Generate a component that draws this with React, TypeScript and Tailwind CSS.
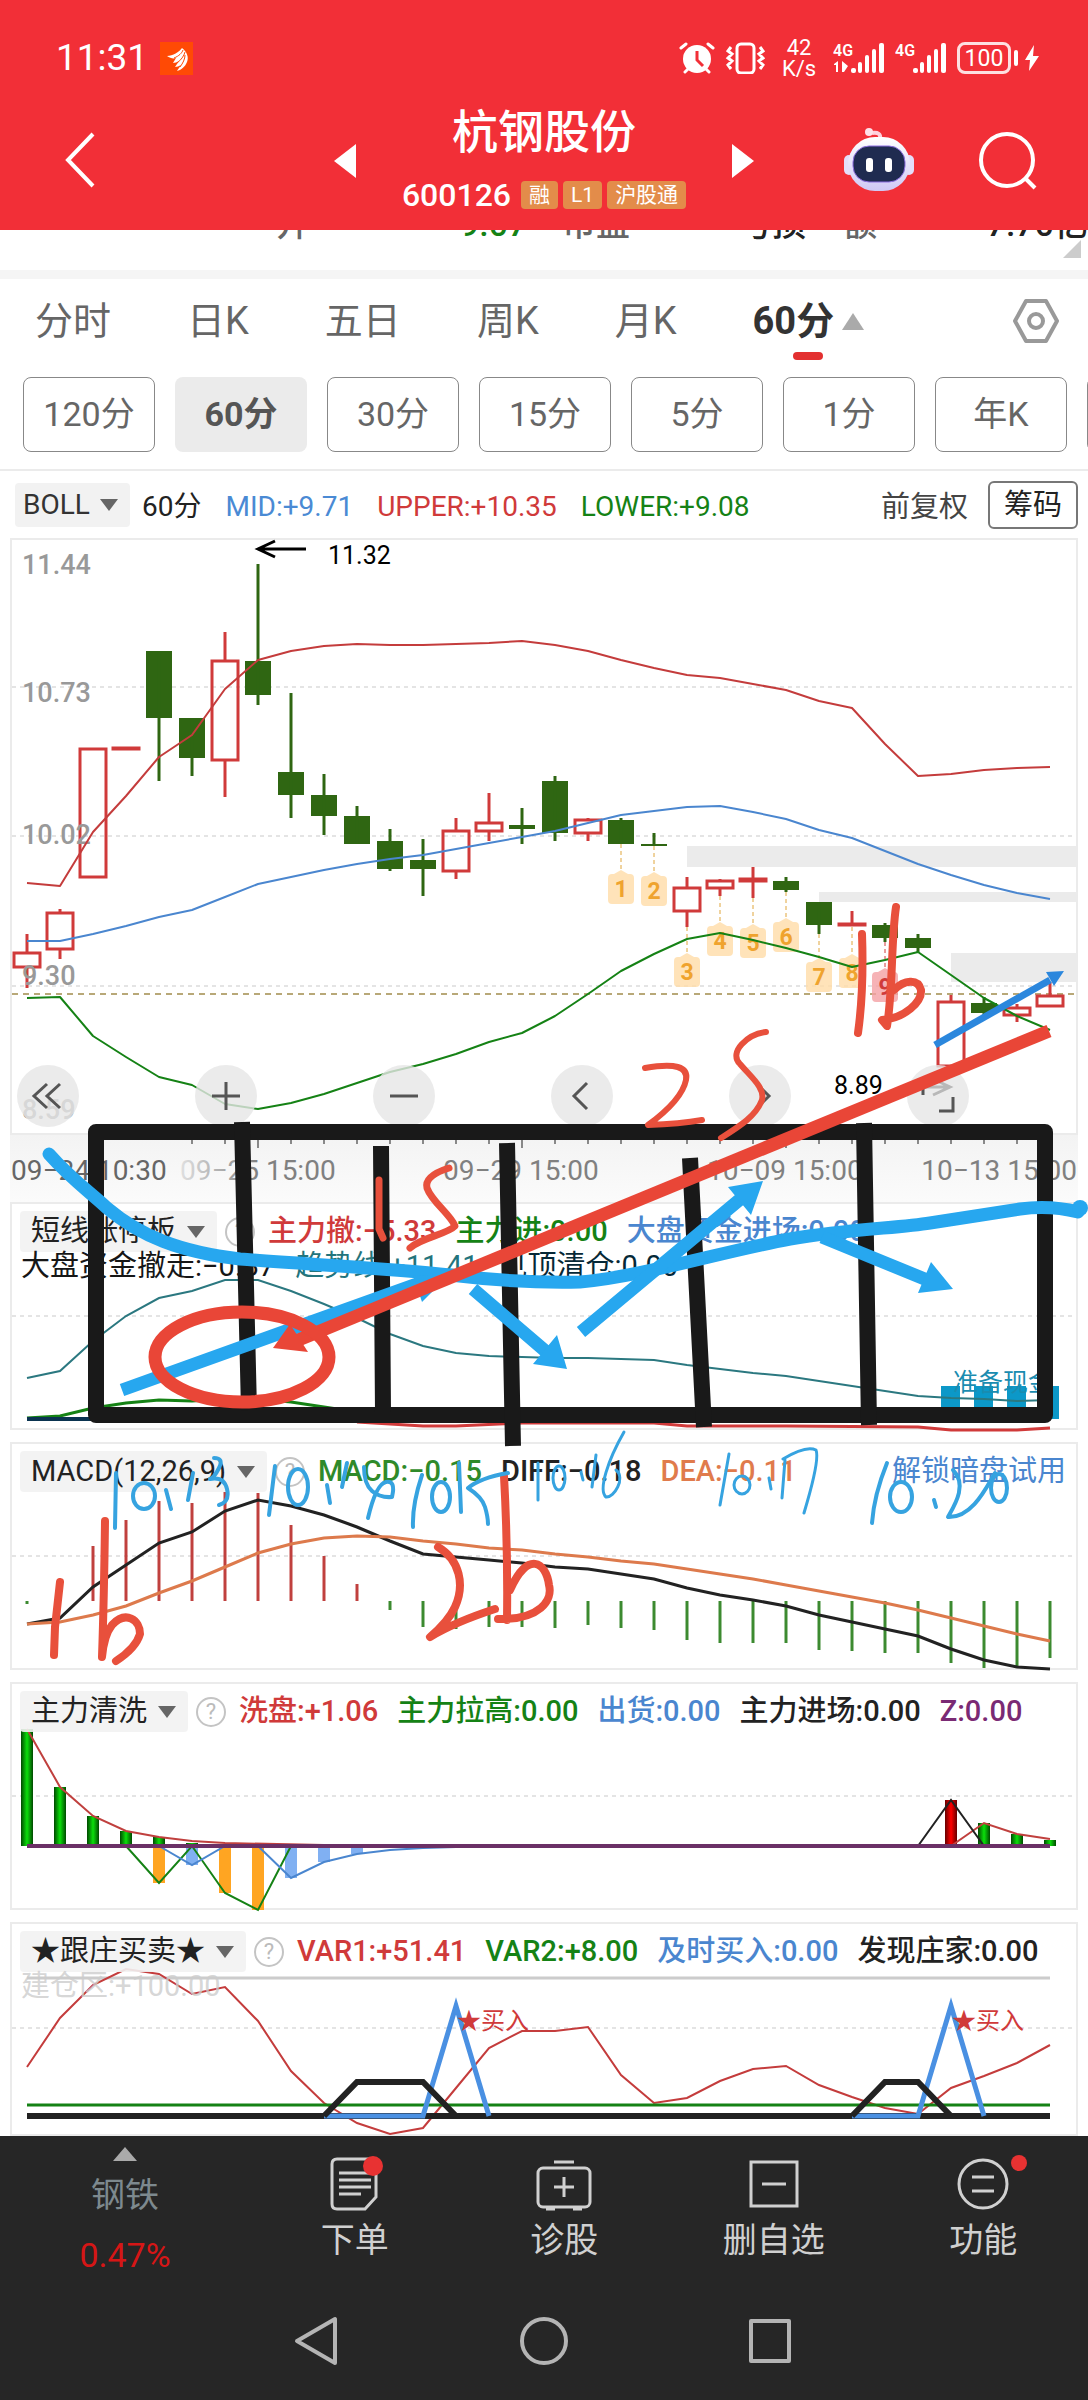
import { useState } from "react";
import type { ReactNode } from "react";

type Point = [number, number];
type Candle = { i: number; up: boolean; high: number; top: number; bottom: number; low: number };
type Value = { text: string; color: string };

// one slot for every 60 minute bar
const x = (i: number) => 27 + i * 33;
const line = (ys: number[], from = 0) => ys.map((y, k) => `${x(from + k)},${y}`).join(" ");
const path = (pts: Point[]) => pts.map(([i, y]) => `${x(i)},${y}`).join(" ");

const TABS = ["分时", "日K", "五日", "周K", "月K", "60分"];
const PERIODS = ["120分", "60分", "30分", "15分", "5分", "1分", "年K"];

const UPPER = [883, 886, 832, 796, 757, 735, 689, 660, 651, 646, 644, 645, 645, 644, 643, 641, 645, 651, 660, 668, 675, 678, 684, 690, 701, 708, 744, 776, 774, 770, 768, 767];
const MID = [941, 941, 934, 926, 917, 910, 897, 884, 877, 870, 864, 859, 855, 849, 843, 837, 831, 823, 815, 811, 807, 806, 812, 819, 830, 838, 851, 864, 875, 885, 893, 899];
const LOWER = [998, 997, 1036, 1057, 1077, 1085, 1104, 1109, 1103, 1094, 1083, 1072, 1064, 1054, 1042, 1033, 1016, 994, 971, 954, 939, 933, 940, 948, 957, 967, 960, 952, 975, 998, 1016, 1030];

const CANDLES: Candle[] = [
  { i: 0, up: true, high: 934, top: 953, bottom: 967, low: 988 },
  { i: 1, up: true, high: 909, top: 913, bottom: 949, low: 959 },
  { i: 2, up: true, high: 749, top: 749, bottom: 877, low: 877 },
  { i: 3, up: true, high: 749, top: 748, bottom: 749, low: 749 },
  { i: 4, up: false, high: 651, top: 651, bottom: 718, low: 781 },
  { i: 5, up: false, high: 718, top: 718, bottom: 758, low: 776 },
  { i: 6, up: true, high: 632, top: 661, bottom: 760, low: 797 },
  { i: 7, up: false, high: 564, top: 661, bottom: 695, low: 705 },
  { i: 8, up: false, high: 693, top: 772, bottom: 795, low: 818 },
  { i: 9, up: false, high: 774, top: 795, bottom: 816, low: 835 },
  { i: 10, up: false, high: 806, top: 816, bottom: 844, low: 844 },
  { i: 11, up: false, high: 829, top: 841, bottom: 869, low: 871 },
  { i: 12, up: false, high: 839, top: 860, bottom: 869, low: 896 },
  { i: 13, up: true, high: 818, top: 831, bottom: 871, low: 879 },
  { i: 14, up: true, high: 793, top: 823, bottom: 831, low: 841 },
  { i: 15, up: false, high: 808, top: 825, bottom: 829, low: 844 },
  { i: 16, up: false, high: 776, top: 781, bottom: 833, low: 841 },
  { i: 17, up: true, high: 818, top: 820, bottom: 833, low: 841 },
  { i: 18, up: false, high: 818, top: 820, bottom: 844, low: 844 },
  { i: 19, up: false, high: 833, top: 844, bottom: 846, low: 846 },
  { i: 20, up: true, high: 877, top: 888, bottom: 911, low: 927 },
  { i: 21, up: true, high: 879, top: 881, bottom: 888, low: 896 },
  { i: 22, up: true, high: 867, top: 879, bottom: 881, low: 898 },
  { i: 23, up: false, high: 877, top: 881, bottom: 890, low: 892 },
  { i: 24, up: false, high: 902, top: 902, bottom: 925, low: 934 },
  { i: 25, up: true, high: 911, top: 924, bottom: 925, low: 925 },
  { i: 26, up: false, high: 923, top: 925, bottom: 938, low: 942 },
  { i: 27, up: false, high: 934, top: 938, bottom: 948, low: 952 },
  { i: 28, up: true, high: 995, top: 1002, bottom: 1066, low: 1068 },
  { i: 29, up: false, high: 997, top: 1003, bottom: 1013, low: 1015 },
  { i: 30, up: true, high: 1004, top: 1008, bottom: 1015, low: 1022 },
  { i: 31, up: true, high: 982, top: 996, bottom: 1006, low: 1007 },
];

// nine-turn markers: slot, where the dotted stem starts, tip of the tag
const TURNS = [
  [18, 844, 870], [19, 846, 872], [20, 927, 953], [21, 896, 922], [22, 898, 924],
  [23, 892, 918], [24, 934, 958], [25, 927, 954], [26, 942, 968],
];

const AXIS_LABELS = [
  { text: "11.44", y: 574 }, { text: "10.73", y: 702 }, { text: "10.02", y: 844 }, { text: "9.30", y: 985 }, { text: "8.59", y: 1119 },
];

const MACD = [1604, 1601, 1546, 1520, 1501, 1503, 1492, 1493, 1525, 1556, 1584, 1610, 1627, 1629, 1627, 1627, 1628, 1625, 1628, 1630, 1640, 1643, 1643, 1643, 1650, 1651, 1653, 1653, 1663, 1668, 1667, 1658];
const DIFF = [1624, 1618, 1587, 1565, 1543, 1532, 1511, 1500, 1506, 1515, 1527, 1541, 1554, 1557, 1560, 1563, 1567, 1569, 1574, 1579, 1588, 1595, 1600, 1606, 1615, 1622, 1629, 1636, 1649, 1660, 1667, 1669];
const DEA = [1624, 1622, 1615, 1606, 1593, 1581, 1567, 1553, 1544, 1538, 1536, 1537, 1541, 1544, 1548, 1550, 1554, 1557, 1561, 1564, 1569, 1574, 1579, 1585, 1591, 1597, 1603, 1610, 1618, 1626, 1634, 1641];
const TREND = [1378, 1371, 1341, 1316, 1298, 1291, 1280, 1280, 1291, 1304, 1318, 1334, 1346, 1353, 1356, 1357, 1358, 1358, 1359, 1360, 1365, 1369, 1373, 1376, 1381, 1386, 1391, 1396, 1398, 1399, 1401, 1400];
const VAR1 = [2067, 2018, 1985, 1969, 1974, 1994, 1987, 2021, 2071, 2103, 2123, 2134, 2128, 2088, 2048, 2031, 2031, 2027, 2075, 2103, 2098, 2081, 2069, 2066, 2085, 2097, 2108, 2114, 2088, 2076, 2063, 2045];

const RED = "#d03a3a";
const GREEN = "#158215";

const CaretDown = () => (
  <svg viewBox="0 0 18 12" className="pointer-events-none h-3 w-[18px]" aria-hidden="true">
    <path d="M0 0h18L9 12z" fill="#666" />
  </svg>
);

const Signal = ({ data }: { data?: boolean }) => (
  <svg viewBox="0 0 52 34" className="h-[34px] w-[52px]" fill="#fff" aria-hidden="true">
    <text x="0" y="15" fontSize="16" fontWeight="600">4G</text>
    {data && <path d="M1 23l4-3v11H3v-7H1zM9 20l6 5-4 6H9z" />}
    <rect x="18" y="27" width="5" height="5" rx="2" />
    <rect x="25" y="21" width="4" height="11" rx="2" />
    <rect x="32" y="14" width="4" height="18" rx="2" />
    <rect x="39" y="8" width="4" height="24" rx="2" />
    <rect x="46" y="2" width="5" height="30" rx="2" />
  </svg>
);

const StatusBar = () => (
  <div className="flex h-[88px] items-end justify-between pr-[49px] pl-14">
    <div className="flex h-[60px] items-center gap-3">
      <span className="text-[37px] leading-10">11:31</span>
      <svg viewBox="0 0 33 33" className="size-[33px]" aria-hidden="true">
        <rect width="33" height="33" fill="#ff4a05" />
        <path d="M7 14C13 14 19 10 22 6c5 4 7 9 5 14-2 5-6 8-10 9 1-2 3-4 4-6-2 1-4 2-6 2l4-6c-2 1-4 2-6 2l3-5c-3 1-6 0-9-2z" fill="#fff" />
        <path d="M14 16c5-2 8-5 9-8M17 21c4-3 7-7 8-11M20 25c3-4 5-8 5-12" stroke="#ff4a05" fill="none" />
      </svg>
    </div>
    <div className="flex h-[60px] items-center gap-[10px]">
      <svg viewBox="0 0 36 32" className="h-8 w-9" aria-hidden="true">
        <circle cx="18" cy="17" r="14" fill="#fff" />
        <path d="M2 6l5-4M34 6l-5-4M6 30l4-4M30 30l-4-4" stroke="#fff" strokeWidth="3" strokeLinecap="round" />
        <path d="M18 9v9l6 6" stroke="#f22f37" strokeWidth="3" fill="none" />
      </svg>
      <svg viewBox="0 0 40 32" className="h-8 w-10" fill="none" stroke="#fff" strokeWidth="3" aria-hidden="true">
        <rect x="12" y="2" width="17" height="29" rx="4" />
        <path d="M6 5L3 9l4 3-4 4 4 3-4 4 3 4M35 5l3 4-4 3 4 4-4 3 4 4-3 4" />
      </svg>
      <span className="mx-[6px] w-[36px] text-center text-[22px] leading-[21px]">42 K/s</span>
      <Signal data />
      <Signal />
      <div className="flex items-center gap-[3px]">
        <span className="flex h-8 w-[54px] items-center justify-center rounded-lg border-[3px] border-white/85 text-[23px] leading-none">100</span>
        <i className="h-4 w-1 rounded-sm bg-white" />
        <svg viewBox="0 0 14 26" className="ml-1 h-[26px] w-[14px]" fill="#fff" aria-hidden="true">
          <path d="M9 0L0 15h5L4 26l10-15H8z" />
        </svg>
      </div>
    </div>
  </div>
);

const Robot = () => (
  <svg viewBox="0 0 70 66" className="h-[66px] w-[70px]" aria-hidden="true">
    <defs>
      <linearGradient id="shell" x1="0" y1="0" x2="0" y2="1">
        <stop offset="0" stopColor="#fff" />
        <stop offset="1" stopColor="#cfc8f5" />
      </linearGradient>
    </defs>
    <path d="M36 12c1-5-2-7-8-6" stroke="#ffd0dc" strokeWidth="4" fill="none" />
    <circle cx="25" cy="5" r="4" fill="#ffe0e8" />
    <rect x="0" y="28" width="10" height="20" rx="5" fill="#e4defa" />
    <rect x="60" y="28" width="10" height="20" rx="5" fill="#e4defa" />
    <rect x="4" y="10" width="62" height="54" rx="27" fill="url(#shell)" />
    <rect x="9" y="19" width="52" height="36" rx="16" fill="#1f2b50" stroke="#8d6fe0" />
    <rect x="22" y="31" width="7" height="14" rx="3" fill="#fff" />
    <rect x="41" y="31" width="7" height="14" rx="3" fill="#fff" />
  </svg>
);

const Header = () => (
  <header className="h-[230px] bg-[#f22f37] text-white">
    <StatusBar />
    <div className="grid grid-cols-[1fr_420px_1fr] pt-4">
      <button aria-label="返回" className="flex items-center justify-self-start pl-16">
        <svg viewBox="0 0 32 56" className="h-14 w-8" fill="none" stroke="#fff" strokeWidth="4" aria-hidden="true">
          <path d="M29 2L4 28l25 26" />
        </svg>
      </button>
      <div className="flex items-start justify-between">
        <button aria-label="上一只" className="mt-10">
          <svg viewBox="0 0 22 34" className="h-[34px] w-[22px]" fill="#fff" aria-hidden="true"><path d="M22 0v34L0 17z" /></svg>
        </button>
        <div className="flex flex-col items-center gap-[15px]">
          <h1 className="text-[46px] leading-14 font-medium">杭钢股份</h1>
          <div className="flex items-center gap-[5px]">
            <span className="mr-[5px] text-[32px] leading-10 font-medium">600126</span>
            <span className="rounded-sm bg-[#e38c4a] px-2 text-[21px] leading-7">融</span>
            <span className="rounded-sm bg-[#e38c4a] px-2 text-[21px] leading-7">L1</span>
            <span className="rounded-sm bg-[#e38c4a] px-2 text-[21px] leading-7">沪股通</span>
          </div>
        </div>
        <button aria-label="下一只" className="mt-10">
          <svg viewBox="0 0 22 34" className="h-[34px] w-[22px]" fill="#fff" aria-hidden="true"><path d="M0 0v34l22-17z" /></svg>
        </button>
      </div>
      <div className="flex items-center gap-16 justify-self-end pr-[50px]">
        <button aria-label="智能助手"><Robot /></button>
        <button aria-label="搜索">
          <svg viewBox="0 0 60 60" className="size-[60px]" fill="none" stroke="#fff" strokeWidth="4" aria-hidden="true">
            <circle cx="29" cy="30" r="26" />
            <path d="M47 48l10 10" />
          </svg>
        </button>
      </div>
    </div>
  </header>
);

// last row of the quote table, scrolled under the header
const QuoteStrip = () => (
  <div className="h-[49px] overflow-hidden border-b-[9px] border-[#f5f5f5]">
    <div className="-mt-[26px] flex h-9 text-[34px] leading-10 font-medium whitespace-nowrap text-[#666]">
      <span className="w-[460px] pl-[276px]">开</span>
      <span className="w-[102px] text-[#158215]">9.07</span>
      <span className="w-[176px]">市盈</span>
      <span className="w-[105px] text-[#222]">亏损</span>
      <span>额</span>
      <span className="ml-auto text-[#222]">7.70亿</span>
    </div>
    <svg viewBox="0 0 18 18" className="mr-[7px] ml-auto size-[18px]" fill="#ccc" aria-hidden="true">
      <path d="M18 0v18H0z" />
    </svg>
  </div>
);

const Tabs = () => {
  const [tab, setTab] = useState("60分");

  return (
    <nav className="flex h-[98px] items-start gap-[76px] pt-5 pr-[29px] pl-[35px] text-[38px] leading-11 text-[#666]">
      {TABS.map((name) => (
        <button key={name} onClick={() => setTab(name)} className="flex flex-col items-center gap-[9px]">
          <span className={tab === name ? "flex items-center gap-2 font-bold text-[#333]" : "flex items-center gap-2"}>
            {name}
            {name === "60分" && (
              <svg viewBox="0 0 22 17" className="h-[17px] w-[22px]" fill="#aaa" aria-hidden="true"><path d="M11 0l11 17H0z" /></svg>
            )}
          </span>
          {tab === name && <i className="h-2 w-[30px] rounded-sm bg-[#e33030]" />}
        </button>
      ))}
      <button aria-label="设置" className="ml-auto">
        <svg viewBox="0 0 46 44" className="h-11 w-[46px]" fill="none" stroke="#999" strokeWidth="4" strokeLinejoin="round" aria-hidden="true">
          <path d="M13 2h20l11 20-11 20H13L2 22z" />
          <circle cx="23" cy="22" r="7" />
        </svg>
      </button>
    </nav>
  );
};

const Periods = () => {
  const [period, setPeriod] = useState("60分");

  return (
    <div className="flex h-[94px] gap-5 overflow-hidden border-b-2 border-[#ebebeb] pl-[23px]">
      {[...PERIODS, ""].map((name) => (
        <button
          key={name}
          aria-label={name || "更多"}
          onClick={() => setPeriod(name)}
          className={
            period === name
              ? "h-[75px] w-33 shrink-0 rounded-lg bg-[#ebebeb] text-[34px] font-bold text-[#555]"
              : "h-[75px] w-33 shrink-0 rounded-lg border border-[#888] text-[34px] text-[#666]"
          }
        >
          {name}
        </button>
      ))}
    </div>
  );
};

const BollBar = () => (
  <div className="flex h-[67px] items-center pt-px pr-[10px] pl-[15px] text-[28px] leading-[44px] whitespace-nowrap">
    <div className="flex items-center gap-[10px] rounded bg-[#f2f2f2] pr-3 pl-2 text-[#333]">
      <select aria-label="主图指标" className="appearance-none"><option>BOLL</option></select>
      <CaretDown />
    </div>
    <div className="flex gap-6 pt-1 pl-3">
      <span className="text-[#222]">60分</span>
      <span className="text-[#4a8ad4]">MID:+9.71</span>
      <span className="text-[#d03a3a]">UPPER:+10.35</span>
      <span className="text-[#158215]">LOWER:+9.08</span>
    </div>
    <button className="ml-auto pt-1 text-[29px] text-[#444]">前复权</button>
    <button className="ml-5 rounded-md border-2 border-[#777] px-[14px] text-[29px] text-[#222]">筹码</button>
  </div>
);

const Panel = ({ viewBox, children, header }: { viewBox: string; children: ReactNode; header?: ReactNode }) => (
  <section className="mx-[10px] grid border-2 border-[#ebebeb]">
    <svg viewBox={viewBox} className="col-start-1 row-start-1 w-full overflow-visible" fill="none">{children}</svg>
    {header && <div className="z-10 col-start-1 row-start-1">{header}</div>}
  </section>
);

const IndicatorHeader = ({ name, values, extra }: { name: string; values: Value[]; extra?: ReactNode }) => (
  <div className="flex items-center pt-[7px] pl-2 text-[29px] leading-[41px] whitespace-nowrap">
    <div className="flex items-center gap-[10px] rounded bg-[#f2f2f2]/90 pr-3 pl-[11px] text-[#222]">
      <select aria-label={name} className="appearance-none"><option>{name}</option></select>
      <CaretDown />
    </div>
    <button aria-label="说明" className="ml-2 flex size-[30px] items-center justify-center rounded-full border-2 border-[#c4c4c4] text-[22px] leading-none text-[#bbb]">?</button>
    <div className="ml-[13px] flex gap-[19px] font-medium">
      {values.map((v) => <span key={v.text} style={{ color: v.color }}>{v.text}</span>)}
    </div>
    {extra}
  </div>
);

const Dashes = ({ y }: { y: number }) => <path d={`M12 ${y}H1076`} stroke="#e4e4e4" strokeWidth="2" strokeDasharray="4 4" />;

const CandleMark = ({ i, up, high, top, bottom, low }: Candle) => {
  if (!up) {
    return (
      <g fill="#2f6612">
        <rect x={x(i) - 13} y={top} width="26" height={bottom - top} />
        <path d={`M${x(i)} ${high}V${low}`} stroke="#2f6612" strokeWidth="3" />
      </g>
    );
  }
  return (
    <g stroke={RED} strokeWidth="3">
      <path d={`M${x(i)} ${high}V${top}M${x(i)} ${bottom}V${low}`} />
      <rect x={x(i) - 13} y={top} width="26" height={bottom - top} />
    </g>
  );
};

const MainChart = () => (
  <Panel
    viewBox="12 540 1064 593"
    header={
      <div className="flex h-full items-end gap-[116px] pb-[6px] pl-[5px] text-[#555]">
        {[
          ["最早", "M30 19L17 31l13 12M43 19L30 31l13 12"],
          ["放大", "M31 17v28M17 31h28"],
          ["缩小", "M17 31h28"],
          ["向左", "M36 18L23 31l13 13"],
          ["向右", "M27 18l13 13-13 13"],
          ["全屏", "M16 30V17h14M46 32v14H32"],
        ].map(([label, d]) => (
          <button key={label} aria-label={label} className="size-[62px] rounded-full bg-[#e6e6e6]/80">
            <svg viewBox="0 0 62 62" fill="none" stroke="currentColor" strokeWidth="3" aria-hidden="true"><path d={d} /></svg>
          </button>
        ))}
      </div>
    }
  >
    <g fill="#ebebeb">
      <rect x="687" y="846" width="389" height="21" />
      <rect x="819" y="892" width="257" height="10" />
      <rect x="951" y="953" width="125" height="29" />
    </g>
    <Dashes y={687} />
    <Dashes y={836} />
    <Dashes y={986} />
    <path d="M12 994H1076" stroke="#b8a878" strokeWidth="2" strokeDasharray="6 5" />
    {CANDLES.map((c) => <CandleMark key={c.i} {...c} />)}
    {AXIS_LABELS.map((l) => (
      <text key={l.text} x="22" y={l.y} fontSize="27" fontWeight="500" fill="#999">{l.text}</text>
    ))}
    {TURNS.map(([i, stem, tip], n) => (
      <g key={i}>
        <path d={`M${x(i)} ${stem}V${tip}`} stroke={n === 8 ? RED : "#e0a63c"} strokeDasharray="4 3" />
        <path
          d={`M${x(i)} ${tip}l7 4h2q4 0 4 4v22q0 4-4 4h-18q-4 0-4-4v-22q0-4 4-4h2z`}
          fill={n === 8 ? "#f4a0a4" : "#ffdca8"}
          fillOpacity="0.8"
        />
        <text x={x(i)} y={tip + 27} fontSize="23" fontWeight="700" textAnchor="middle" fill={n === 8 ? RED : "#efa32e"}>{n + 1}</text>
      </g>
    ))}
    <g strokeWidth="2" strokeLinejoin="round">
      <polyline points={line(UPPER)} stroke="#c43c3c" />
      <polyline points={line(MID)} stroke="#4a86cf" />
      <polyline points={line(LOWER)} stroke={GREEN} />
    </g>
    <path d="M306 549H259M275 541l-17 8 17 8M902 1087h47M933 1079l17 8-17 8" stroke="#000" strokeWidth="3" />
    <text x="328" y="564" fontSize="25" fill="#000">11.32</text>
    <text x="834" y="1094" fontSize="25" fill="#000">8.89</text>
  </Panel>
);

const DateAxis = () => (
  <svg viewBox="10 1135 1068 67" className="w-full px-[10px]" fontSize="28" aria-label="时间轴">
    <defs>
      <linearGradient id="axis" x1="0" y1="0" x2="0" y2="1">
        <stop offset="0" stopColor="#f3f3f3" />
        <stop offset="1" stopColor="#fbfbfb" />
      </linearGradient>
      <linearGradient id="fade">
        <stop offset="0" stopColor="#e0e0e0" />
        <stop offset="50%" stopColor="#808080" />
      </linearGradient>
    </defs>
    <rect x="10" y="1135" width="1068" height="67" fill="url(#axis)" />
    {Array.from({ length: 27 }, (_, n) => (
      <path key={n} d={`M${x(n + 5)} 1135v${(n + 5) % 8 === 7 ? 13 : 9}`} stroke="#888" strokeWidth="2" />
    ))}
    <text x="11" y="1180" fill="#666">09−24 10:30</text>
    <text x="180" y="1180" fill="url(#fade)">09−25 15:00</text>
    <text x="443" y="1180" fill="#808080">09−29 15:00</text>
    <text x="707" y="1180" fill="#808080">10−09 15:00</text>
    <text x="1077" y="1180" fill="#808080" textAnchor="end">10−13 15:00</text>
  </svg>
);

const LimitUpPanel = () => (
  <Panel
    viewBox="12 1204 1064 224"
    header={
      <>
        <IndicatorHeader
          name="短线涨停板"
          values={[
            { text: "主力撤:−5.33", color: RED },
            { text: "主力进:0.00", color: GREEN },
            { text: "大盘资金进场:0.00", color: "#4a86cf" },
          ]}
        />
        <div className="flex gap-5 pl-[9px] text-[29px] leading-7 whitespace-nowrap text-[#161616]">
          <span>大盘资金撤走:−0.87</span>
          <span className="text-[#23747c]">趋势线:+11.41</span>
          <span className="text-[#062836]">见顶清仓:0.00</span>
        </div>
      </>
    }
  >
    <Dashes y={1316} />
    <g fill="#0c98c8">
      {[941, 974, 1007, 1040].map((left) => <rect key={left} x={left} y="1386" width="19" height="33" />)}
    </g>
    <g strokeWidth="3">
      <polyline points={line(TREND)} stroke="#2b7880" strokeWidth="2" />
      <polyline points={line([1418, 1416, 1408, 1403, 1400, 1401, 1399, 1399, 1402, 1407, 1412, 1416])} stroke={GREEN} />
      <path d="M27 1419H1050" stroke="#0a3350" strokeWidth="4" />
      <polyline points={path([[10, 1422], [12, 1426], [13, 1426], [15, 1423], [19, 1423], [20, 1426], [23, 1426], [27, 1427], [28, 1430], [30, 1430], [31, 1428]])} stroke={RED} />
    </g>
    <text x="953" y="1391" fontSize="25" fill="#1a8cb0">准备现金</text>
  </Panel>
);

const MacdPanel = () => (
  <Panel
    viewBox="12 1444 1064 224"
    header={
      <IndicatorHeader
        name="MACD(12,26,9)"
        values={[
          { text: "MACD:−0.15", color: "#2f8a2a" },
          { text: "DIFF:−0.18", color: "#222" },
          { text: "DEA:−0.11", color: "#e07b4c" },
        ]}
        extra={<a href="#unlock" className="mr-[10px] ml-auto text-[#4a86cf]">解锁暗盘试用</a>}
      />
    }
  >
    <Dashes y={1556} />
    {MACD.map((y, i) => <path key={i} d={`M${x(i)} 1601V${y}`} stroke={y < 1601 ? "#c0403e" : "#3c8a30"} strokeWidth="3" />)}
    <polyline points={line(DIFF)} stroke="#222" strokeWidth="3" />
    <polyline points={line(DEA)} stroke="#dd7a4c" strokeWidth="3" />
  </Panel>
);

const WashPanel = () => (
  <Panel
    viewBox="12 1684 1064 224"
    header={
      <IndicatorHeader
        name="主力清洗"
        values={[
          { text: "洗盘:+1.06", color: RED },
          { text: "主力拉高:0.00", color: GREEN },
          { text: "出货:0.00", color: "#4a86cf" },
          { text: "主力进场:0.00", color: "#222" },
          { text: "Z:0.00", color: "#7a2a74" },
        ]}
      />
    }
  >
    <defs>
      <linearGradient id="buy">
        <stop offset="0" stopColor="#004800" />
        <stop offset="50%" stopColor="#0be00b" />
        <stop offset="1" stopColor="#004800" />
      </linearGradient>
      <linearGradient id="enter">
        <stop offset="0" stopColor="#600" />
        <stop offset="50%" stopColor="#f00" />
        <stop offset="1" stopColor="#600" />
      </linearGradient>
    </defs>
    <Dashes y={1796} />
    {[[0, 1729], [1, 1787], [2, 1816], [3, 1831], [4, 1837], [5, 1843], [29, 1823], [30, 1834], [31, 1840]].map(([i, y]) => (
      <rect key={i} x={x(i) - 6} y={y} width="12" height={1846 - y} fill="url(#buy)" />
    ))}
    <rect x={x(28) - 6} y="1800" width="12" height="46" fill="url(#enter)" />
    {[[4, 1883], [6, 1893], [7, 1910]].map(([i, y]) => <rect key={i} x={x(i) - 6} y="1846" width="12" height={y - 1846} fill="#ffa522" />)}
    {[[5, 1865], [8, 1878], [9, 1862], [10, 1854]].map(([i, y]) => <rect key={i} x={x(i) - 6} y="1846" width="12" height={y - 1846} fill="#80b0f2" />)}
    <g strokeWidth="2">
      <polyline points={path([[3, 1846], [4, 1883], [5, 1846], [6, 1893], [7, 1910], [8, 1846]])} stroke={GREEN} />
      <polyline points={path([[4, 1846], [5, 1865], [6, 1846], [7, 1846], [8, 1878], [9, 1862], [10, 1854], [11, 1850], [12, 1848], [14, 1846]])} stroke="#4a86cf" />
      <polyline points={path([[0, 1729], [1, 1787], [2, 1816], [3, 1831], [4, 1837], [5, 1841], [6, 1843], [9, 1845], [12, 1846], [28, 1846], [29, 1823], [30, 1834], [31, 1839]])} stroke="#c0403e" />
      <polyline points={path([[27, 1846], [28, 1800], [29, 1846]])} stroke="#222" />
    </g>
    <path d="M27 1846H1050" stroke="#6b3066" strokeWidth="4" />
  </Panel>
);

const FollowPanel = () => (
  <Panel
    viewBox="12 1924 1064 210"
    header={
      <>
        <IndicatorHeader
          name="★跟庄买卖★"
          values={[
            { text: "VAR1:+51.41", color: RED },
            { text: "VAR2:+8.00", color: GREEN },
            { text: "及时买入:0.00", color: "#4a86cf" },
            { text: "发现庄家:0.00", color: "#222" },
          ]}
        />
        <div className="pl-[9px] text-[29px] leading-7 text-[#ccc]/80">建仓区:+100.00</div>
      </>
    }
  >
    <path d="M27 1978H1050" stroke="#ccc" strokeWidth="3" />
    <Dashes y={2028} />
    <polyline points={line(VAR1)} stroke="#c43c3c" strokeWidth="2" />
    <path d="M27 2105H1050" stroke={GREEN} strokeWidth="3" />
    <path d="M27 2116H1050" stroke="#222" strokeWidth="6" />
    {[9, 25].map((i) => (
      <g key={i}>
        <polyline points={path(i === 9 ? [[9, 2116], [12, 2116], [13, 2006], [14, 2116]] : [[25, 2116], [27, 2116], [28, 2006], [29, 2116]])} stroke="#4a90e2" strokeWidth="5" />
        <polyline points={path(i === 9 ? [[9, 2116], [10, 2082], [12, 2082], [13, 2116]] : [[25, 2116], [26, 2082], [27, 2082], [28, 2116]])} stroke="#222" strokeWidth="6" />
      </g>
    ))}
    <text x="457" y="2029" fontSize="24" fill="#d03a3a">★买入</text>
    <text x="952" y="2029" fontSize="24" fill="#d03a3a">★买入</text>
  </Panel>
);

// freehand marks drawn over all the charts
const Annotations = () => (
  <svg viewBox="0 538 1088 1598" className="pointer-events-none absolute inset-0 z-20 w-full" fill="none" strokeLinecap="round" strokeLinejoin="round" aria-hidden="true">
    <g stroke="#191919" strokeWidth="16" strokeLinecap="butt">
      <path d="M96 1132H1045V1415H96z" />
      <path d="M242 1122l7 288M381 1146l2 266M507 1143l6 303M690 1158l14 269M864 1123l5 302" />
    </g>

    <g stroke="#27a7ef" strokeWidth="13">
      <path d="M49 1154C72 1180 90 1192 107 1208C140 1236 180 1252 240 1259C300 1264 390 1268 450 1275C500 1281 540 1283 580 1282C640 1277 720 1252 790 1239C850 1229 900 1228 930 1223L1020 1209Q1050 1205 1078 1212" />
      <path d="M122 1390L425 1281M473 1289L550 1355M581 1332L744 1196M822 1237L932 1282" strokeLinecap="butt" />
    </g>
    <g fill="#27a7ef">
      <path d="M413 1275l34 2-25 25zM533 1364l34 5-10-34zM728 1187l35-6-12 34zM931 1262l22 27-35 4z" />
      <circle cx="1080" cy="1208" r="8" />
    </g>

    <path d="M935 1045L1050 980" stroke="#2b87dd" strokeWidth="7" strokeLinecap="butt" />
    <path d="M1046 972l18-1-10 15z" fill="#2b87dd" />

    <g stroke="#e94637" strokeWidth="13" strokeLinecap="butt">
      <path d="M1049 1031L296 1341" />
      <ellipse cx="242" cy="1357" rx="87" ry="45" />
    </g>
    <path d="M290 1324l-17 24 35 4z" fill="#e94637" />

    <g stroke="#e8503c" strokeWidth="8">
      <path d="M645 1068Q690 1060 686 1080T648 1125Q680 1124 702 1120" strokeWidth="6" />
      <path d="M766 1032C748 1034 728 1052 740 1064C752 1078 765 1088 762 1100C756 1116 740 1126 721 1138" strokeWidth="6" />
      <path d="M862 934Q864 990 858 1033M896 907C891 940 893 990 887 1026L882 1020C905 1018 922 1002 921 990C918 978 904 980 894 990" />
      <path d="M379 1180V1229l4 9M449 1168Q424 1176 427 1188C432 1202 450 1214 455 1226C448 1234 420 1238 410 1248" strokeWidth="7" />
      <path d="M60 1582L55 1627 54 1655M105 1521Q104 1600 102 1657Q104 1635 112 1625C126 1610 140 1620 140 1634Q136 1648 116 1661" />
      <path d="M438 1547C460 1560 465 1585 455 1607Q448 1622 430 1637Q455 1622 495 1609M504 1476Q508 1550 507 1620M498 1619C540 1620 553 1600 549 1585C546 1562 528 1550 510 1590" />
    </g>

    <g stroke="#36a3e0" strokeWidth="4">
      <path d="M116 1473l-1 55M166 1490l5 19M193 1473l-5 27M214 1458Q224 1458 219 1468T210 1479Q224 1476 227 1489T219 1505" />
      <ellipse cx="144" cy="1496" rx="11" ry="13" />
      <path d="M275 1466l-6 49M327 1485l3 18M347 1463l-5 24M364 1467Q364 1484 372 1491T392 1497Q396 1480 386 1482T368 1518" />
      <ellipse cx="298" cy="1487" rx="10" ry="18" />
      <path d="M422 1475Q412 1505 413 1527M459 1463l2 49M508 1473Q480 1478 468 1488Q482 1497 485 1507T488 1524" />
      <ellipse cx="441" cy="1497" rx="9" ry="15" />
      <g strokeWidth="3">
        <path d="M538 1463v37M581 1472l2 8M596 1455l-4 32M624 1432C608 1460 598 1490 606 1497C614 1498 626 1478 616 1470" />
        <ellipse cx="559" cy="1478" rx="6" ry="12" />
        <path d="M729 1454l-9 51M769 1478l2 11M785 1460l-3 38M783 1459Q806 1445 816 1450Q820 1460 804 1513" />
        <ellipse cx="742" cy="1485" rx="8" ry="9" />
      </g>
      <path d="M887 1463Q874 1495 872 1523M934 1500l2 7M953 1470C968 1485 954 1506 948 1517C972 1518 986 1488 995 1473" />
      <ellipse cx="901" cy="1497" rx="11" ry="15" />
      <ellipse cx="999" cy="1488" rx="8" ry="14" />
    </g>
  </svg>
);

const NavItem = ({ label, dot, children }: { label: string; dot?: boolean; children: ReactNode }) => (
  <button className="flex flex-col items-center gap-1 pt-5 text-[34px] leading-12 text-[#d0d0d0]">
    <span className="relative">
      <svg viewBox="0 0 56 56" className="size-14" fill="none" stroke="#d0d0d0" strokeWidth="3" aria-hidden="true">{children}</svg>
      {dot && <i className="absolute -top-px -right-4 size-4 rounded-full bg-[#e83232]" />}
    </span>
    {label}
  </button>
);

const BottomNav = () => (
  <footer className="bg-[#262626]">
    <div className="grid h-[156px] grid-cols-[250px_repeat(4,1fr)]">
      <button className="flex flex-col items-center pt-[11px] text-[34px] leading-[60px] text-[#7d898e]">
        <svg viewBox="0 0 24 14" className="mb-1 h-[14px] w-6" fill="#aaa" aria-hidden="true"><path d="M12 0l12 14H0z" /></svg>
        <span>钢铁</span>
        <span className="text-[#d61616]">0.47%</span>
      </button>
      <NavItem label="下单">
        <path d="M10 3h32q7 0 7 7v31l-11 12H10q-5 0-5-5V8q0-5 5-5z" />
        <path d="M12 17h32M12 24h32M12 31h32M12 38h22" />
        <circle cx="46" cy="10" r="10" fill="#e83232" stroke="none" />
      </NavItem>
      <NavItem label="诊股">
        <rect x="2" y="12" width="52" height="39" rx="5" />
        <path d="M18 6h20M28 21v20M18 31h20M10 53h9M37 53h9" />
      </NavItem>
      <NavItem label="删自选">
        <rect x="5" y="6" width="46" height="44" />
        <path d="M16 28h24" />
      </NavItem>
      <NavItem label="功能" dot>
        <circle cx="28" cy="28" r="24" />
        <path d="M17 21h22M17 35h22" />
      </NavItem>
    </div>
    <div className="flex h-[108px] justify-center gap-[176px] pt-6">
      {[
        ["返回", "M42 3v44L4 25z"],
        ["主页", "M25 3a22 22 0 1 1 0 44a22 22 0 1 1 0-44z"],
        ["最近任务", "M6 5h38v40H6z"],
      ].map(([label, d]) => (
        <button key={label} aria-label={label} className="size-[50px]">
          <svg viewBox="0 0 50 50" fill="none" stroke="#b4b4b4" strokeWidth="4" strokeLinejoin="round" aria-hidden="true"><path d={d} /></svg>
        </button>
      ))}
    </div>
  </footer>
);

export default function App() {
  return (
    <div className="overflow-hidden bg-white font-['Roboto','Noto_Sans_CJK_SC',sans-serif]">
      <Header />
      <QuoteStrip />
      <Tabs />
      <Periods />
      <BollBar />
      <main className="relative flex flex-col">
        <MainChart />
        <DateAxis />
        <div className="flex flex-col gap-3">
          <LimitUpPanel />
          <MacdPanel />
          <WashPanel />
          <FollowPanel />
        </div>
        <Annotations />
      </main>
      <BottomNav />
    </div>
  );
}
